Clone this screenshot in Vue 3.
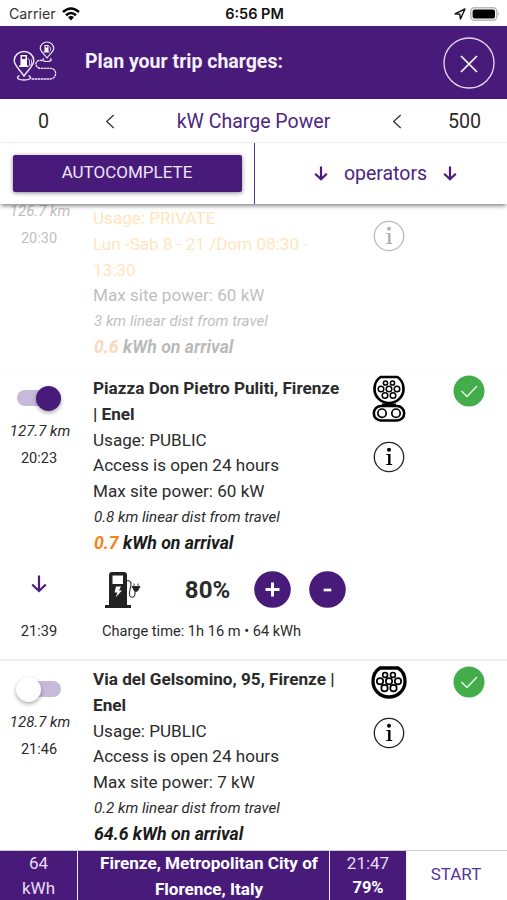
<script setup>
const stations = [
  {
    id: 'private', distance: '126.7 km', time: '20:30', faded: true,
    warnings: ['Usage: PRIVATE', 'Lun -Sab 8 - 21 /Dom 08:30 - 13:30'],
    details: ['Max site power: 60 kW'],
    away: '3 km linear dist from travel', energy: '0.6', low: true,
  },
  {
    id: 'piazza', title: 'Piazza Don Pietro Puliti, Firenze | Enel', distance: '127.7 km', time: '20:23', on: true,
    details: ['Usage: PUBLIC', 'Access is open 24 hours', 'Max site power: 60 kW'],
    away: '0.8 km linear dist from travel', energy: '0.7', low: true, plug: 'combo',
    charge: { end: '21:39', level: '80%', summary: 'Charge time: 1h 16 m • 64 kWh' },
  },
  {
    id: 'via', title: 'Via del Gelsomino, 95, Firenze | Enel', distance: '128.7 km', time: '21:46', on: false,
    details: ['Usage: PUBLIC', 'Access is open 24 hours', 'Max site power: 7 kW'],
    away: '0.2 km linear dist from travel', energy: '64.6', plug: 'type2',
  },
]
const pins = [[13, 6.5], [20, 6.5], [8.5, 12.5], [16.5, 12.5], [24.5, 12.5], [12.5, 19], [20.5, 19]]
</script>

<template>
  <div class="screen">
    <div class="status">
      <div class="carrier">
        <span>Carrier</span>
        <svg class="wifi" viewBox="0 0 18 14">
          <path d="M1 5Q9-2 17 5M4 8.2Q9 3.8 14 8.2" fill="none" stroke="#000" stroke-width="2.5" />
          <path d="M6 10Q9 7.8 12 10L9 13.5Z" />
        </svg>
      </div>
      <span class="clock">6:56 PM</span>
      <div class="indicators">
        <svg class="location" viewBox="0 0 12 12"><path d="M1 5.8 11 1 6.4 11 5.8 6.2Z" fill="none" stroke="#111" stroke-width="1.4" stroke-linejoin="round" /></svg>
        <svg class="battery" viewBox="0 0 30 14">
          <rect x=".8" y=".8" width="26" height="12.4" rx="3.6" fill="#fff" stroke="#b9b9b9" stroke-width="1.5" />
          <rect x="2.6" y="2.5" width="22.4" height="9" rx="2" /><path d="M28.2 4.8Q30 7 28.2 9.2Z" fill="#aaa" />
        </svg>
      </div>
    </div>

    <header class="header">
      <svg class="trip" viewBox="0 0 44 42">
        <g fill="none" stroke="#f2eaf9" stroke-width="1.4">
          <path d="M11 35C7 29 1.2 24.5 1.2 19.5a9.8 9 0 0 1 19.6 0C20.8 24.5 15 29 11 35Z" />
          <path d="M6.5 34.500C2 37 6 39 11 39s9-2 4.500-4.500" />
          <path d="M34 17C31.500 13.500 27.300 10.500 27.300 7.200a6.700 6.200 0 0 1 13.400 0C40.700 10.500 36.500 13.500 34 17Z" stroke-width="1.2" />
          <path d="M31 17.500c-3 2 0 3 3 3s6-1 3-3" stroke-width="1.2" />
          <path d="M29 19.500c-8-1.500-8 7.800-1 7.800h9c8 0 7 10.700 0 10.700H18" stroke-width="1.300" stroke-dasharray="2.500 .5" />
          <path d="M14.500 17l2 2v5.500l2-1v-5" stroke-width=".8" />
        </g>
        <path fill="#fff" d="M7.500 14h6.500v10.500h1.500v1.500H6v-1.500h1.500ZM31.500 4h4v6.500h1v1h-6v-1h1Z" />
        <path fill="#481b7b" d="M9 15.500h3.500V18H9ZM32.500 5h2v1.500h-2Z" />
        <path d="m35.800 5 1.700 1.500v3.200" fill="none" stroke="#fff" stroke-width=".7" />
      </svg>
      <h1>Plan your trip charges:</h1>
      <svg class="close" viewBox="0 0 52 52"><circle cx="26" cy="26" r="25" fill="none" stroke="#e6d9f3" stroke-width="1.3" /><path d="m18 19 16 16M34 19 18 35" stroke="#fff" stroke-width="1.7" /></svg>
    </header>

    <div class="power">
      <span class="min">0</span>
      <svg class="chevron" viewBox="0 0 10 15"><path d="M8.700 1 1.700 7.500 8.700 14" fill="none" stroke="#333" stroke-width="1.300" /></svg>
      <span class="label">kW Charge Power</span>
      <svg class="chevron" viewBox="0 0 10 15"><path d="M8.700 1 1.700 7.500 8.700 14" fill="none" stroke="#333" stroke-width="1.300" /></svg>
      <span class="max">500</span>
    </div>

    <div class="actions">
      <div class="auto"><button>AUTOCOMPLETE</button></div>
      <div class="operators">
        <svg class="arrow" viewBox="0 0 14 15"><path d="M7 .5v12.800M1.200 7.700 7 13.300l5.800-5.600" /></svg>
        <span>operators</span>
        <svg class="arrow" viewBox="0 0 14 15"><path d="M7 .5v12.800M1.200 7.700 7 13.300l5.800-5.600" /></svg>
      </div>
    </div>

    <main class="list">
      <section v-for="s in stations" :key="s.id" class="station" :class="[s.id, { faded: s.faded }]">
        <div class="overview">
          <div class="side">
            <div v-if="!s.faded" class="toggle" :class="{ on: s.on }"><i></i></div>
            <em class="distance">{{ s.distance }}</em>
            <span class="time">{{ s.time }}</span>
          </div>
          <div class="info">
            <h2 v-if="s.title">{{ s.title }}</h2>
            <p v-for="w in s.warnings" :key="w" class="warning">{{ w }}</p>
            <p v-for="d in s.details" :key="d">{{ d }}</p>
            <p class="away">{{ s.away }}</p>
            <p class="energy"><span :class="{ low: s.low }">{{ s.energy }}</span> kWh on arrival</p>
          </div>
          <div class="icons">
            <svg v-if="s.plug === 'combo'" class="combo" viewBox="0 0 34 47">
              <path d="M8.500 2h17C30 5 31.500 9 31.500 14a14.500 14 0 0 1-29 0C2.500 9 4 5 8.500 2Z" fill="#fff" stroke="#000" stroke-width="2.700" />
              <g fill="#fff" stroke="#000" stroke-width="1.500"><circle v-for="(p, i) in pins" :key="i" :cx="p[0] + .5" :cy="p[1] + 1.500" :r="i < 2 ? 2.100 : 2.800" /></g>
              <path d="M10 28.500h14v2H10Z" />
              <rect x="1.800" y="31" width="30.400" height="14.500" rx="7.200" fill="#fff" stroke="#000" stroke-width="2.600" />
              <g fill="#fff" stroke="#000" stroke-width="1.700"><circle cx="10" cy="38.200" r="4.200" /><circle cx="24" cy="38.200" r="4.200" /></g>
            </svg>
            <svg v-if="s.plug === 'type2'" class="type2" viewBox="0 0 36 33">
              <path d="M9 2h18C32 5 34 9 34 15.500a16 15.500 0 0 1-32 0C2 9 4 5 9 2Z" fill="#fff" stroke="#000" stroke-width="3.300" />
              <g fill="#fff" stroke="#000" stroke-width="1.700"><circle v-for="(p, i) in pins" :key="i" :cx="(p[0] - 16.500) * 1.120 + 18" :cy="p[1] * 1.060 + 2" :r="i < 2 ? 2.400 : 3.200" /></g>
            </svg>
            <svg class="about" viewBox="0 0 32 32"><circle cx="16" cy="16" r="14.700" fill="none" stroke="#222" stroke-width="1.300" /><circle cx="16" cy="8.800" r="2" /><path d="M13.300 13h4.200v10h1.700v1h-6v-1h1.900v-9h-1.800Z" /></svg>
          </div>
          <svg v-if="!s.faded" class="check" viewBox="0 0 32 32"><circle cx="16" cy="16" r="15.500" fill="#43ad4b" /><path d="m8.500 16 5.500 5.500L24 11" fill="none" stroke="#e6f7e4" stroke-width="1.500" /></svg>
        </div>
        <template v-if="s.charge">
          <div class="charging">
            <svg class="arrow down" viewBox="0 0 16 18"><path d="M8 .5v15.500M1.200 9.500 8 16l6.800-6.500" /></svg>
            <svg class="pump" viewBox="0 0 37 38">
              <path d="M5 34V4q0-3 3-3h12q3 0 3 3v30h4v3H1v-3Z" fill="#222" /><path d="M8.500 4.500h10.500v8.500H8.500Z" fill="#fff" /><path d="m12 15.500h5l-2 4h3l-6.500 7 2-5h-3Z" fill="#fff" />
              <path d="M23 9.500c3 0 4 1 4 3.500 0 5-3 9-1 12 2 2.500 5 1 5-2v-3" fill="none" stroke="#333" stroke-width="1.100" /><path d="M28 15.500h8v1h-1q-.5 4-3 4t-3-4h-1ZM30 12.500v4M34 12.500v4" fill="#222" stroke="#222" stroke-width=".8" />
            </svg>
            <strong>{{ s.charge.level }}</strong>
            <svg class="round plus" viewBox="0 0 37 37"><circle cx="18.500" cy="18.500" r="18.300" fill="#481b7b" /><path d="M18.500 11.500v14M11.500 18.500h14" stroke="#fff" stroke-width="3" /></svg>
            <svg class="round" viewBox="0 0 37 37"><circle cx="18.500" cy="18.500" r="18.300" fill="#481b7b" /><path d="M14.700 19h7.600" stroke="#fff" stroke-width="2.700" /></svg>
          </div>
          <div class="summary"><span>{{ s.charge.end }}</span><span class="duration">{{ s.charge.summary }}</span></div>
        </template>
      </section>
    </main>

    <footer class="footer">
      <div class="cell"><span>64</span><span>kWh</span></div>
      <div class="cell destination">Firenze, Metropolitan City of Florence, Italy</div>
      <div class="cell"><span>21:47</span><b>79%</b></div>
      <div class="start">START</div>
    </footer>
  </div>
</template>

<style>
body { background: #fff; }
</style>
<style scoped>
.screen { width: 507px; height: 900px; overflow: hidden; display: flex; flex-direction: column; background: #fff; font-family: Roboto, sans-serif; color: #2b2b2b; font-size: 17.1px; }
svg { display: block; flex: none; }
h1, h2, p { margin: 0; }
.status { height: 25.500px; flex: none; display: grid; grid-template-columns: 1fr auto 1fr; align-items: center; box-sizing: border-box; padding: 2px 7px 0 9px; font-family: Inter, sans-serif; font-size: 14.2px; color: #333; }
.carrier { display: flex; align-items: center; gap: 6px; }
.wifi { width: 18px; height: 14px; }
.clock { font-weight: 600; color: #111; font-size: 14.500px; }
.indicators { display: flex; justify-content: flex-end; align-items: center; gap: 4px; }
.location { width: 12px; height: 12px; }
.battery { width: 30px; height: 14px; }
.header { height: 73px; flex: none; background: #481b7b; color: #f6f0fb; display: flex; align-items: center; padding: 0 12px 0 13px; }
.trip { width: 44px; height: 42px; }
.header h1 { flex: 1; margin: 0 0 1px 28px; font-size: 19.500px; font-weight: 700; }
.close { width: 52px; height: 52px; margin-top: 2px; }
.power { height: 43px; flex: none; display: grid; grid-template-columns: 87px 47px 239px 49px 85px; align-items: center; justify-items: center; font-size: 19.700px; box-sizing: border-box; padding-top: 2px; }
.chevron { width: 10px; height: 15px; margin-right: 1px; }
.label, .operators { color: #4b2680; }
.label { font-size: 19.500px; }
.actions { height: 62.500px; flex: none; display: grid; grid-template-columns: 255px 1fr; z-index: 1; background: #fff; box-shadow: 0 3px 4px -1px #0007; border-top: 1.500px solid #eee; box-sizing: border-box; }
.auto { border-right: 1.500px solid #573492; padding: 12px 12px 0 13px; }
.auto button { width: 100%; height: 37px; padding: 0 1px 2px 0; border: 0; border-radius: 2px; background: #481b7b; color: #eee5f7; box-shadow: 0 1px 4px #0007; font: 400 17px Roboto, sans-serif; }
.operators { display: flex; align-items: center; justify-content: center; gap: 16px; font-size: 19.500px; padding-left: 9px; }
.arrow { width: 14px; height: 15px; }
.arrow path { fill: none; stroke: #481b7b; stroke-width: 2.200; }
.list { flex: 1; min-height: 0; overflow: hidden; }
.station { box-sizing: border-box; padding-top: 5px; }
.station.private { height: 166px; padding-top: 1px; border-bottom: 1px solid #fafafa; }
.station.piazza { height: 291px; border-bottom: 2px solid #eee; }
.faded .overview { opacity: .3; }
.overview { display: grid; grid-template-columns: 78px 270px 82px 77px; align-items: start; }
.side { display: flex; flex-direction: column; align-items: center; padding-top: 1px; }
.toggle { width: 44px; height: 16px; margin: 14px 0 15px; border-radius: 8px; background: #c7b9da; display: flex; align-items: center; }
.toggle i { width: 25px; height: 25px; flex: none; margin-left: -1px; border-radius: 50%; background: #fff; box-shadow: 0 2px 4px #0005; }
.toggle.on { justify-content: flex-end; }
.toggle.on i { background: #481b7b; }
.distance, .time { font-size: 15px; line-height: 20px; }
.distance { margin-left: 2px; }
.time { margin-top: 8px; font-size: 14.500px; }
.private .side { margin-top: -5px; }
.info { padding: 1px 5px 0 15px; line-height: 25.800px; }
.info h2 { font-size: 17.150px; font-weight: 700; line-height: inherit; padding-right: 1px; }
.warning { color: #ffab23; max-width: 230px; }
.info .away { font-size: 15.100px; font-style: italic; padding-left: 1px; }
.energy { font-size: 17.700px; font-weight: 700; font-style: italic; color: #1b1b1b; white-space: nowrap; padding-left: 1px; }
.low { color: #f58218; }
.icons { display: flex; flex-direction: column; align-items: center; }
.combo { width: 34px; height: 47px; }
.about { width: 32px; height: 32px; margin-top: 19px; }
.private .about { margin-top: 15px; }
.type2 { width: 36px; height: 33px; }
.via .about { margin-top: 18px; }
.check { width: 32px; height: 32px; justify-self: center; }
.charging { display: grid; grid-template-columns: 77px 91px 79px 50px 60px; align-items: center; justify-items: center; height: 44px; margin-top: 11px; }
.down { width: 16px; height: 18px; margin-top: -11px; }
.pump { width: 37px; height: 38px; }
.charging strong { font-size: 24px; }
.round { width: 37px; height: 37px; }
.summary { display: grid; grid-template-columns: 78px 1fr; height: 30px; align-items: center; margin-top: 4px; font-size: 14.600px; }
.summary span:first-child { text-align: center; }
.duration { padding-left: 24px; }
.footer { height: 50px; flex: none; display: grid; grid-template-columns: 78px 252px 77px 100px; box-sizing: border-box; border-top: 1px solid #ccc; line-height: 24.500px; color: #e9def3; font-size: 17px; }
.cell { background: #481b7b; display: flex; flex-direction: column; align-items: center; text-align: center; border-right: 1.500px solid #eee; box-sizing: border-box; }
.cell b { color: #fff; font-size: 16.500px; }
.destination { display: block; font-weight: 700; font-size: 17.100px; line-height: 25.500px; padding: 0 4px 0 15px; color: #fff; }
.start { display: flex; align-items: center; justify-content: center; color: #573492; font-size: 17px; padding: 0 2px 4px 0; }
</style>
